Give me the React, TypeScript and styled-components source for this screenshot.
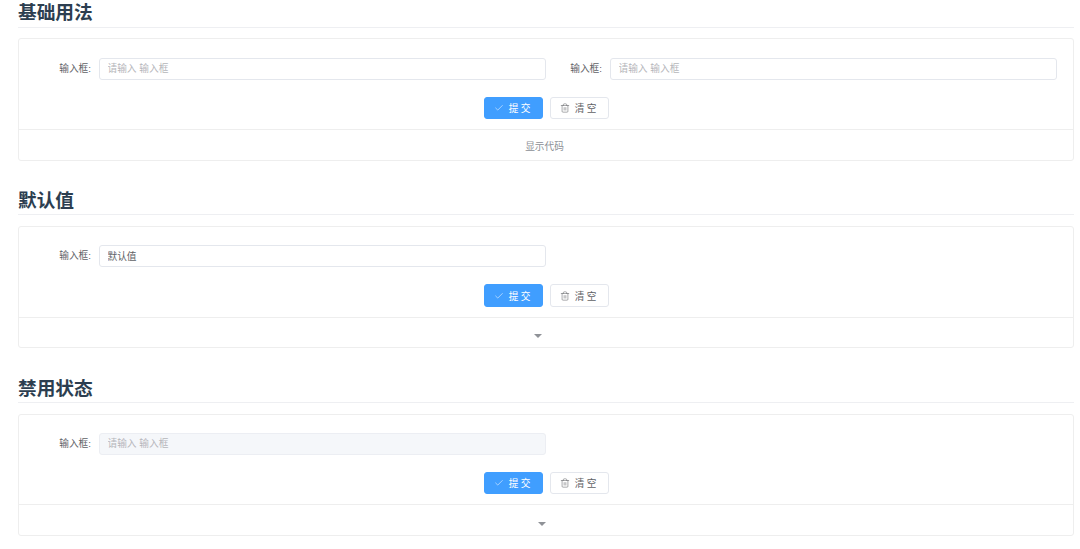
import React from 'react'
import styled, { createGlobalStyle } from 'styled-components'
import { Check, Trash2 } from 'lucide-react'

const GlobalStyle = createGlobalStyle`
  html, body {
    margin: 0;
    padding: 0;
    background: #fff;
    font-family: "Liberation Sans", "Noto Sans CJK SC", sans-serif;
  }
  * { box-sizing: border-box; }
`
const Page = styled.div`
  width: 1080px;
  height: 549px;
  padding: 0.4px 6px 0 18px;
  overflow: hidden;
`
const Section = styled.section`
  height: 187.6px;
`
const Title = styled.h2`
  margin: 0 0 10.5px;
  height: 27.5px;
  line-height: 26px;
  font-size: 18.7px;
  font-weight: 700;
  color: #2c3e50;
  border-bottom: 1px solid #eeeff2;
`
const Card = styled.div`
  border: 1px solid #eeeeee;
  border-radius: 3px;
  height: 122.5px;
  display: flex;
  flex-direction: column;
`
const Form = styled.div`
  height: 90.6px;
  padding: 18.4px 0 0 16px;
  border-bottom: 1px solid #eeeeee;
`
const Row = styled.div`
  display: flex;
  height: 22px;
`
const Field = styled.label`
  flex: 0 0 511px;
  display: flex;
  align-items: center;
`
const Label = styled.span`
  width: 64px;
  text-align: right;
  padding: 0 8px 2px 0;
  font-size: 9.7px;
  color: #606266;
`
const Input = styled.input`
  width: 446.5px;
  height: 22px;
  padding: 0 7.5px 1px;
  font-family: inherit;
  font-size: 9.7px;
  color: #606266;
  background: ${p => (p.disabled ? '#f5f7fa' : '#fff')};
  border: 1px solid ${p => (p.disabled ? '#eceef3' : '#e4e7ed')};
  border-radius: 3px;
  outline: none;
  &::placeholder { color: #b5b6ba; opacity: 1; }
`
const Actions = styled.div`
  display: flex;
  justify-content: center;
  gap: 7px;
  margin-top: 17px;
  padding-right: 16px;
`
const Button = styled.button<{ $primary?: boolean }>`
  width: ${p => (p.$primary ? '59.5px' : '58.5px')};
  height: 22.5px;
  padding: 0;
  display: flex;
  align-items: center;
  justify-content: center;
  gap: 5px;
  font-family: inherit;
  font-size: 9.7px;
  letter-spacing: 2.4px;
  color: ${p => (p.$primary ? '#fff' : '#606266')};
  background: ${p => (p.$primary ? '#409eff' : '#fff')};
  border: 1px solid ${p => (p.$primary ? '#409eff' : '#e4e7ed')};
  border-radius: 3px;
`
const Footer = styled.div`
  flex: 1;
  display: flex;
  align-items: center;
  justify-content: center;
  padding: 2px 3px 0 0;
  font-size: 9.7px;
  color: #8c8f96;
`
const Caret = styled.i<{ $gap: number }>`
  width: 0;
  height: 0;
  margin: 5px ${p => p.$gap}px 0 0;
  border-style: solid;
  border-width: 4.5px 4px 0;
  border-color: #8f9297 transparent transparent;
`

const InputField = ({ value, disabled }: { value?: string; disabled?: boolean }) => (
  <Field>
    <Label>输入框:</Label>
    <Input placeholder="请输入 输入框" defaultValue={value} disabled={disabled} />
  </Field>
)

const Demo = ({ title, children, footer }: { title: string; children: React.ReactNode; footer: React.ReactNode }) => (
  <Section>
    <Title>{title}</Title>
    <Card>
      <Form>
        <Row>{children}</Row>
        <Actions>
          <Button $primary>
            <Check size={10} strokeWidth={1.3} />
            提交
          </Button>
          <Button>
            <Trash2 size={10} strokeWidth={1.3} />
            清空
          </Button>
        </Actions>
      </Form>
      <Footer>{footer}</Footer>
    </Card>
  </Section>
)

const App = () => (
  <Page>
    <GlobalStyle />
    <Demo title="基础用法" footer="显示代码">
      <InputField />
      <InputField />
    </Demo>
    <Demo title="默认值" footer={<Caret $gap={13} />}>
      <InputField value="默认值" />
    </Demo>
    <Demo title="禁用状态" footer={<Caret $gap={5} />}>
      <InputField disabled />
    </Demo>
  </Page>
)

export default App
